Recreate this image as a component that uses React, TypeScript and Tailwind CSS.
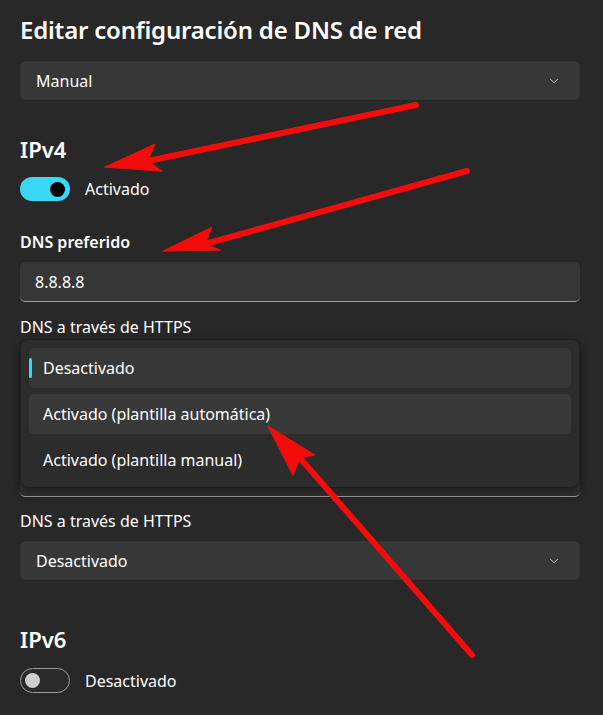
import { ChevronDown } from "lucide-react";

const font = { fontFamily: '"Noto Sans", "Open Sans", sans-serif' };

const Select = ({ value }: { value: string }) => (
  <div className="flex h-[39px] items-center justify-between rounded-[5px] border border-[#333333] bg-[#373737] pl-[15px] pr-[18px] text-[16px] text-white">
    <span>{value}</span>
    <ChevronDown className="h-[14px] w-[14px] text-[#dcdcdc]" strokeWidth={1.5} />
  </div>
);

const Toggle = ({ on }: { on: boolean }) =>
  on ? (
    <div className="flex h-[24px] w-[50px] items-center justify-end rounded-full bg-[#38d8f6] pr-[5px]">
      <div className="h-[15px] w-[15px] rounded-full bg-black" />
    </div>
  ) : (
    <div className="flex h-[25px] w-[50px] items-center rounded-full border border-[#9a9a9a] bg-[#2a2a2a] pl-[4px]">
      <div className="h-[15px] w-[15px] rounded-full bg-[#cfcfcf]" />
    </div>
  );

const options = [
  "Desactivado",
  "Activado (plantilla automática)",
  "Activado (plantilla manual)",
];

export default function App() {
  return (
    <div
      className="relative h-[715px] w-[603px] overflow-hidden bg-[#282828] pl-5 pr-[23px] text-white"
      style={font}
    >
      <h1 className="mt-[16px] text-[24px] leading-[28px] font-semibold tracking-[-0.2px]">
        Editar configuración de DNS de red
      </h1>
      <div className="mt-[17px]">
        <Select value="Manual" />
      </div>

      <h2 className="mt-[35px] text-[22px] leading-[28px] font-semibold">IPv4</h2>
      <div className="mt-[14px] flex items-center gap-[15px] text-[16px]">
        <Toggle on />
        <span>Activado</span>
      </div>

      <div className="mt-[31px] text-[16px] leading-[20px] font-semibold">DNS preferido</div>
      <div className="mt-[10px] flex h-[40px] items-center rounded-[5px] border-b border-b-[#9c9c9c] bg-[#363636] pl-[15px] text-[16px]">
        8.8.8.8
      </div>

      <div className="mt-[15px] text-[16px] leading-[20px]">DNS a través de HTTPS</div>

      {/* open combobox list over the field below */}
      <div className="relative mt-[2px] flex h-[158px] flex-col justify-end">
        <div className="h-[40px] rounded-[5px] border-b border-b-[#9c9c9c] bg-[#333333]" />
        <div className="absolute inset-x-0 top-0 flex h-[149px] flex-col gap-[6px] rounded-[8px] border border-[#1e1e1e] bg-[#2c2c2c] px-[8px] pt-[8px] shadow-[0_4px_12px_rgba(0,0,0,0.45)]">
          {options.map((opt, idx) => (
            <div
              key={opt}
              className={
                "relative flex h-[40px] items-center rounded-[5px] pl-[14px] text-[16px] " +
                (idx === 0 ? "bg-[#373737]" : idx === 1 ? "bg-[#393939]" : "")
              }
            >
              {idx === 0 && (
                <div className="absolute top-[10px] left-0 h-[20px] w-[3px] rounded-full bg-[#38d8f6]" />
              )}
              {opt}
            </div>
          ))}
        </div>
      </div>

      <div className="mt-[14px] text-[16px] leading-[20px]">DNS a través de HTTPS</div>
      <div className="mt-[10px]">
        <Select value="Desactivado" />
      </div>

      <h2 className="mt-[45px] text-[22px] leading-[28px] font-semibold">IPv6</h2>
      <div className="mt-[15px] flex items-center gap-[15px] text-[16px]">
        <Toggle on={false} />
        <span>Desactivado</span>
      </div>

      {/* red annotation arrows */}
      <svg
        className="pointer-events-none absolute inset-0"
        width="603"
        height="715"
        viewBox="0 0 603 715"
      >
        <g fill="#f20c0c" stroke="#f20c0c" strokeLinecap="round">
          <line x1="416" y1="105" x2="148" y2="161" strokeWidth="6" />
          <polygon points="105,167 155,144 148,161 162,171" strokeWidth="1" />
          <line x1="467" y1="171" x2="205" y2="244" strokeWidth="6" />
          <polygon points="163,251 212,227 205,244 220,250" strokeWidth="1" />
          <line x1="472" y1="655" x2="300" y2="458" strokeWidth="6" />
          <polygon points="268,426 315,455 300,458 293,475" strokeWidth="1" />
        </g>
      </svg>
    </div>
  );
}
